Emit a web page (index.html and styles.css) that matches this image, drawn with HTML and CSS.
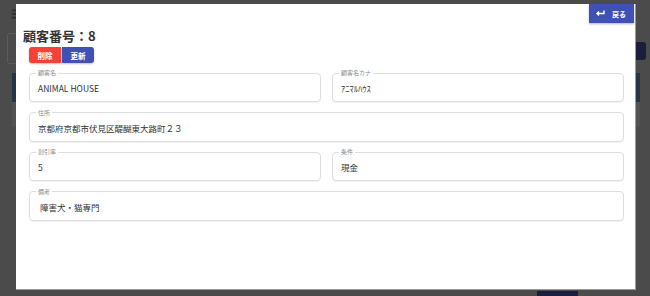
FILE: index.html
```html
<!DOCTYPE html>
<html lang="ja">
<head>
  <meta charset="UTF-8">
  <meta name="viewport" content="width=device-width, initial-scale=1.0">
  <title>顧客詳細</title>
  <link rel="stylesheet" href="styles.css">
</head>
<body>
  <div class="page">
    <div class="page-header">☰</div>
    <div class="toolbar">
      <div class="search-box"></div>
      <div class="new-button"></div>
    </div>
    <div class="table">
      <div class="table-head"></div>
      <div class="table-row"></div>
    </div>
    <div class="page-footer">
      <div class="footer-button"></div>
    </div>
  </div>

  <div class="modal">
    <button class="back-button">
      <svg width="9" height="7" viewBox="0 0 9 7">
        <path d="M3 1.5 L1 3.5 L3 5.5 M1 3.5 H8 V0.5" fill="none" stroke="#fff" stroke-width="1.4"/>
      </svg>
      <span>戻る</span>
    </button>

    <h1 class="modal-title">顧客番号：8</h1>

    <div class="form">
      <div class="actions">
        <button class="btn btn-delete">削除</button>
        <button class="btn btn-update">更新</button>
      </div>

      <div class="fields">
        <fieldset class="field">
          <legend>顧客名</legend>
          <div class="value">ANIMAL HOUSE</div>
        </fieldset>
        <fieldset class="field">
          <legend>顧客名カナ</legend>
          <div class="value">ｱﾆﾏﾙﾊｳｽ</div>
        </fieldset>
        <fieldset class="field wide">
          <legend>住所</legend>
          <div class="value">京都府京都市伏見区醍醐東大路町２３</div>
        </fieldset>
        <fieldset class="field">
          <legend>割引率</legend>
          <div class="value">5</div>
        </fieldset>
        <fieldset class="field">
          <legend>条件</legend>
          <div class="value">現金</div>
        </fieldset>
        <fieldset class="field wide">
          <legend>備考</legend>
          <div class="value"> 障害犬・猫専門</div>
        </fieldset>
      </div>
    </div>
  </div>
</body>
</html>
```

FILE: styles.css
```css
body {
  margin: 0;
  background-color: #4b4b4b;
  font-family: 'Noto Sans CJK JP', 'Noto Sans', sans-serif;
  color: #333;
  overflow: hidden;
}

/* dimmed page behind the dialog */
.page {
  height: 296px;
  display: flex;
  flex-direction: column;
}

.page-header {
  height: 26px;
  padding-left: 11px;
  color: #2e2e2e;
  font-size: 11px;
  line-height: 26px;
}

.toolbar {
  display: flex;
  justify-content: space-between;
  align-items: flex-start;
  padding: 7px 4px 0 7px;
  height: 40px;
  box-sizing: border-box;
}

.search-box {
  width: 200px;
  height: 29px;
  border: 1px solid #5c5c5c;
  border-radius: 3px;
}

.new-button {
  width: 60px;
  height: 18px;
  margin-top: 9px;
  background-color: #1b1d3d;
  border-radius: 3px;
}

.table {
  margin: 7px 10px 0 12px;
}

.table-head {
  height: 29px;
  background-color: #263448;
}

.table-row {
  height: 25px;
  background-color: #525252;
}

.page-footer {
  margin-top: auto;
  display: flex;
  justify-content: flex-end;
  padding-right: 72px;
}

.footer-button {
  width: 41px;
  height: 5px;
  background-color: #1b1d3d;
}

/* dialog */
.modal {
  position: fixed;
  top: 4px;
  left: 16px;
  width: 620px;
  height: 286px;
  box-sizing: border-box;
  background: #fff;
  border-right: 1px solid #9a9a9a;
  border-bottom: 1px solid #9a9a9a;
  padding: 0 11px 0 7px;
}

.back-button {
  position: absolute;
  top: 0;
  right: 1px;
  width: 45px;
  height: 19px;
  border: none;
  padding: 0 0 0 7px;
  background-color: #3f51b5;
  color: #fff;
  display: flex;
  align-items: center;
  gap: 7px;
  font-family: 'Noto Sans CJK JP', sans-serif;
  font-size: 7px;
  font-weight: bold;
  box-shadow: 0 1px 2px rgba(0, 0, 0, 0.3);
}

.modal-title {
  margin: 23px 0 0;
  font-size: 13px;
  line-height: 18px;
  font-weight: bold;
  color: #333;
}

.form {
  padding-left: 6px;
}

.actions {
  display: flex;
  margin-top: 2px;
}

.btn {
  width: 32px;
  height: 16px;
  border: none;
  padding: 0;
  color: #fff;
  font-family: 'Noto Sans CJK JP', sans-serif;
  font-size: 7.5px;
  font-weight: bold;
  box-shadow: 0 1px 2px rgba(0, 0, 0, 0.25);
}

.btn-delete {
  background-color: #f44336;
  border-radius: 3px 0 0 3px;
}

.btn-update {
  background-color: #3f51b5;
  border-radius: 0 3px 3px 0;
  margin-left: 1px;
}

.fields {
  display: grid;
  grid-template-columns: 1fr 1fr;
  column-gap: 11px;
  row-gap: 6.5px;
  margin-top: 6px;
}

.field {
  margin: 0;
  min-width: 0;
  padding: 0 8px 5px;
  border: 1px solid #dedede;
  border-radius: 4px;
  box-shadow: 0 1px 1px rgba(0, 0, 0, 0.06);
}

.field.wide {
  grid-column: 1 / 3;
}

.field legend {
  font-size: 6px;
  line-height: 8px;
  padding: 0 2px;
  margin-left: -2px;
  color: #8a8a8a;
}

.value {
  padding-top: 3px;
  font-size: 8.5px;
  line-height: 16px;
  white-space: pre;
  color: #333;
}
```
